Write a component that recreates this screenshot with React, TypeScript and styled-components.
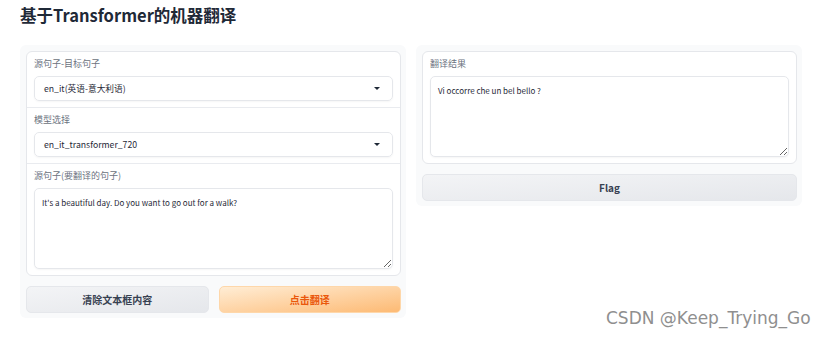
import React from "react"
import styled, { createGlobalStyle } from "styled-components"

const GlobalStyle = createGlobalStyle`
  html, body {
    margin: 0;
    padding: 0;
    background: #ffffff;
  }
  body {
    font-family: "Noto Sans CJK SC", "Noto Sans", sans-serif;
    color: #1f2937;
  }
`

const Page = styled.div`
  position: relative;
  width: 830px;
  height: 337px;
  padding: 0 20px;
  box-sizing: border-box;
  overflow: hidden;
`

const Title = styled.h1`
  margin: 0;
  height: 45px;
  padding-top: 3px;
  box-sizing: border-box;
  font-size: 16.5px;
  line-height: 24px;
  font-weight: 700;
  color: #1f2937;
`

const Row = styled.div`
  display: flex;
  align-items: flex-start;
  gap: 10px;
`

const Column = styled.div`
  width: 386px;
  box-sizing: border-box;
  padding: 6px 5px 5px 6px;
  background: #f9fafb;
  border-radius: 6px;
  display: flex;
  flex-direction: column;
  gap: 10px;
`

const Card = styled.div`
  background: #ffffff;
  border: 1px solid #e5e7eb;
  border-radius: 6px;
  overflow: hidden;
`

const Section = styled.div`
  padding: 6px 7px 6px 7px;
  & + & {
    border-top: 1px solid #e9ebef;
  }
`

const Label = styled.div`
  font-size: 9px;
  line-height: 12px;
  color: #6b7280;
  margin-bottom: 6px;
`

const Select = styled.div`
  height: 25px;
  box-sizing: border-box;
  border: 1px solid #e5e7eb;
  border-radius: 5px;
  box-shadow: 0 1px 2px rgba(0, 0, 0, 0.04);
  padding: 0 12px 0 9px;
  display: flex;
  align-items: center;
  justify-content: space-between;
  font-size: 8.7px;
  color: #1f2937;
`

const Caret = styled.span`
  width: 0;
  height: 0;
  border-left: 3px solid transparent;
  border-right: 3px solid transparent;
  border-top: 3.5px solid #1f2937;
`

const Area = styled.textarea<{ $h: number }>`
  display: block;
  width: 100%;
  height: ${p => p.$h}px;
  box-sizing: border-box;
  margin: 0;
  border: 1px solid #e5e7eb;
  border-radius: 5px;
  box-shadow: 0 1px 2px rgba(0, 0, 0, 0.04);
  padding: 7px 7px;
  font-family: "Noto Sans CJK SC", "Noto Sans", sans-serif;
  font-size: 8px;
  line-height: 13px;
  color: #1f2937;
  outline: none;
  resize: vertical;
`

const Buttons = styled.div`
  display: flex;
  gap: 10px;
`

const Button = styled.button<{ $primary?: boolean }>`
  flex: 1;
  height: 27px;
  border-radius: 5px;
  border: 1px solid ${p => (p.$primary ? "#fed7aa" : "#e5e7eb")};
  background: ${p =>
    p.$primary
      ? "linear-gradient(to bottom right, #ffedd5, #fdba74)"
      : "linear-gradient(to bottom right, #f3f4f6, #e5e7eb)"};
  color: ${p => (p.$primary ? "#ea580c" : "#374151")};
  font-family: "Noto Sans CJK SC", "Noto Sans", sans-serif;
  font-size: 10px;
  font-weight: 700;
  padding: 0;
  cursor: pointer;
`

const Watermark = styled.div`
  position: absolute;
  left: 606px;
  top: 307px;
  font-family: "DejaVu Sans", Verdana, sans-serif;
  font-size: 17px;
  line-height: 22px;
  color: #8f8f8f;
  text-shadow: 0 0 1px #ffffff, 1px 1px 0 #ffffff;
  white-space: nowrap;
`

export default function App() {
  return (
    <Page>
      <GlobalStyle />
      <Title>基于Transformer的机器翻译</Title>
      <Row>
        <Column>
          <Card>
            <Section>
              <Label>源句子-目标句子</Label>
              <Select>
                <span>en_it(英语-意大利语)</span>
                <Caret />
              </Select>
            </Section>
            <Section>
              <Label>模型选择</Label>
              <Select>
                <span>en_it_transformer_720</span>
                <Caret />
              </Select>
            </Section>
            <Section>
              <Label>源句子(要翻译的句子)</Label>
              <Area
                $h={81}
                defaultValue="It's a beautiful day. Do you want to go out for a walk?"
              />
            </Section>
          </Card>
          <Buttons>
            <Button>清除文本框内容</Button>
            <Button $primary>点击翻译</Button>
          </Buttons>
        </Column>
        <Column>
          <Card>
            <Section>
              <Label>翻译结果</Label>
              <Area $h={81} defaultValue="Vi occorre che un bel bello ?" />
            </Section>
          </Card>
          <Buttons>
            <Button>Flag</Button>
          </Buttons>
        </Column>
      </Row>
      <Watermark>CSDN @Keep_Trying_Go</Watermark>
    </Page>
  )
}
